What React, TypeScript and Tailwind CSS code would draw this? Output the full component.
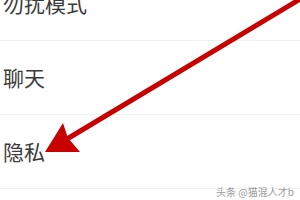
import React from 'react';

const items = ['勿扰模式', '聊天', '隐私'];

export default function App() {
  return (
    <div className="relative w-[300px] h-[200px] overflow-hidden bg-white font-['Noto_Sans_CJK_SC',sans-serif]">
      <div className="-mt-[33px] flex flex-col">
        {items.map((label) => (
          <div
            key={label}
            className="flex h-[74px] items-center border-b border-[#f0f0f0] pl-[3px] text-[21px] text-[#3a3a3a]"
          >
            {label}
          </div>
        ))}
      </div>

      {/* red annotation arrow */}
      <svg className="absolute inset-0" width="300" height="200" viewBox="0 0 300 200">
        <line x1="302" y1="-2" x2="62" y2="142" stroke="#c80000" strokeWidth="5" strokeLinecap="round" />
        <path d="M45 152 L63 123 L68 138 L80 152 Z" fill="#c80000" />
      </svg>

      <div className="absolute right-[6px] top-[184px] text-[10px] text-[#9a9a9a] [text-shadow:0_0_2px_#fff]">
        头条 @猫混人才b
      </div>
    </div>
  );
}
